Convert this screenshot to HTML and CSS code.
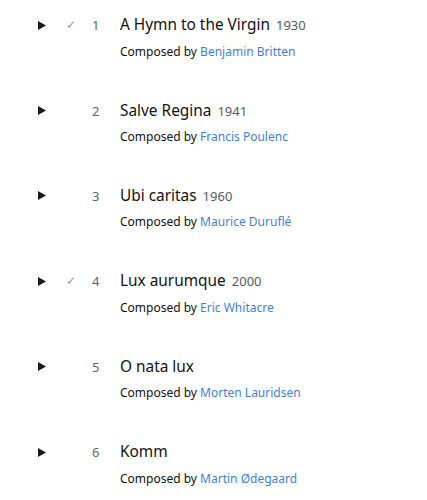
FILE: index.html
```html
<!DOCTYPE html>
<html>
<head>
<meta charset="utf-8">
<link rel="stylesheet" href="styles.css">
</head>
<body>
<ul class="tracks">
  <li class="track">
    <span class="play"><svg viewBox="0 0 8 9" width="8" height="9"><path d="M0 0L8 4.5L0 9Z"/></svg></span>
    <span class="done">✓</span>
    <span class="num">1</span>
    <div class="info">
      <div class="title">A Hymn to the Virgin <span class="year">1930</span></div>
      <div class="composer">Composed by <a href="#">Benjamin Britten</a></div>
    </div>
  </li>
  <li class="track">
    <span class="play"><svg viewBox="0 0 8 9" width="8" height="9"><path d="M0 0L8 4.5L0 9Z"/></svg></span>
    <span class="done"></span>
    <span class="num">2</span>
    <div class="info">
      <div class="title">Salve Regina <span class="year">1941</span></div>
      <div class="composer">Composed by <a href="#">Francis Poulenc</a></div>
    </div>
  </li>
  <li class="track">
    <span class="play"><svg viewBox="0 0 8 9" width="8" height="9"><path d="M0 0L8 4.5L0 9Z"/></svg></span>
    <span class="done"></span>
    <span class="num">3</span>
    <div class="info">
      <div class="title">Ubi caritas <span class="year">1960</span></div>
      <div class="composer">Composed by <a href="#">Maurice Duruflé</a></div>
    </div>
  </li>
  <li class="track">
    <span class="play"><svg viewBox="0 0 8 9" width="8" height="9"><path d="M0 0L8 4.5L0 9Z"/></svg></span>
    <span class="done">✓</span>
    <span class="num">4</span>
    <div class="info">
      <div class="title">Lux aurumque <span class="year">2000</span></div>
      <div class="composer">Composed by <a href="#">Eric Whitacre</a></div>
    </div>
  </li>
  <li class="track">
    <span class="play"><svg viewBox="0 0 8 9" width="8" height="9"><path d="M0 0L8 4.5L0 9Z"/></svg></span>
    <span class="done"></span>
    <span class="num">5</span>
    <div class="info">
      <div class="title">O nata lux</div>
      <div class="composer">Composed by <a href="#">Morten Lauridsen</a></div>
    </div>
  </li>
  <li class="track">
    <span class="play"><svg viewBox="0 0 8 9" width="8" height="9"><path d="M0 0L8 4.5L0 9Z"/></svg></span>
    <span class="done"></span>
    <span class="num">6</span>
    <div class="info">
      <div class="title">Komm</div>
      <div class="composer">Composed by <a href="#">Martin Ødegaard</a></div>
    </div>
  </li>
</ul>
</body>
</html>
```
FILE: styles.css
```css
html, body {
  margin: 0;
  padding: 0;
  background: #fff;
  font-family: "Noto Sans", "Open Sans", sans-serif;
  color: #111;
}
.tracks {
  list-style: none;
  margin: 0;
  padding: 13.2px 0 0 38px;
  display: flex;
  flex-direction: column;
  gap: 37.9px;
}
.track {
  display: flex;
  align-items: flex-start;
}
.play {
  width: 26px;
  height: 24px;
  display: flex;
  align-items: center;
}
.play svg {
  fill: #1a1a1a;
  display: block;
}
.done {
  width: 27px;
  height: 24px;
  line-height: 24px;
  font-size: 12px;
  color: #999;
  padding-left: 2px;
  box-sizing: border-box;
}
.num {
  width: 29px;
  height: 24px;
  line-height: 24px;
  font-size: 13px;
  color: #5f6470;
  padding-left: 1px;
  box-sizing: border-box;
}
.info {
  display: flex;
  flex-direction: column;
  gap: 5.5px;
}
.title {
  font-size: 15.4px;
  line-height: 24px;
  height: 24px;
  color: #111;
}
.year {
  font-size: 13px;
  line-height: 1;
  color: #555a63;
  margin-left: 2px;
}
.composer {
  font-size: 12px;
  line-height: 18px;
  color: #111;
}
.composer a {
  color: #3f7fdc;
  text-decoration: none;
}
```
